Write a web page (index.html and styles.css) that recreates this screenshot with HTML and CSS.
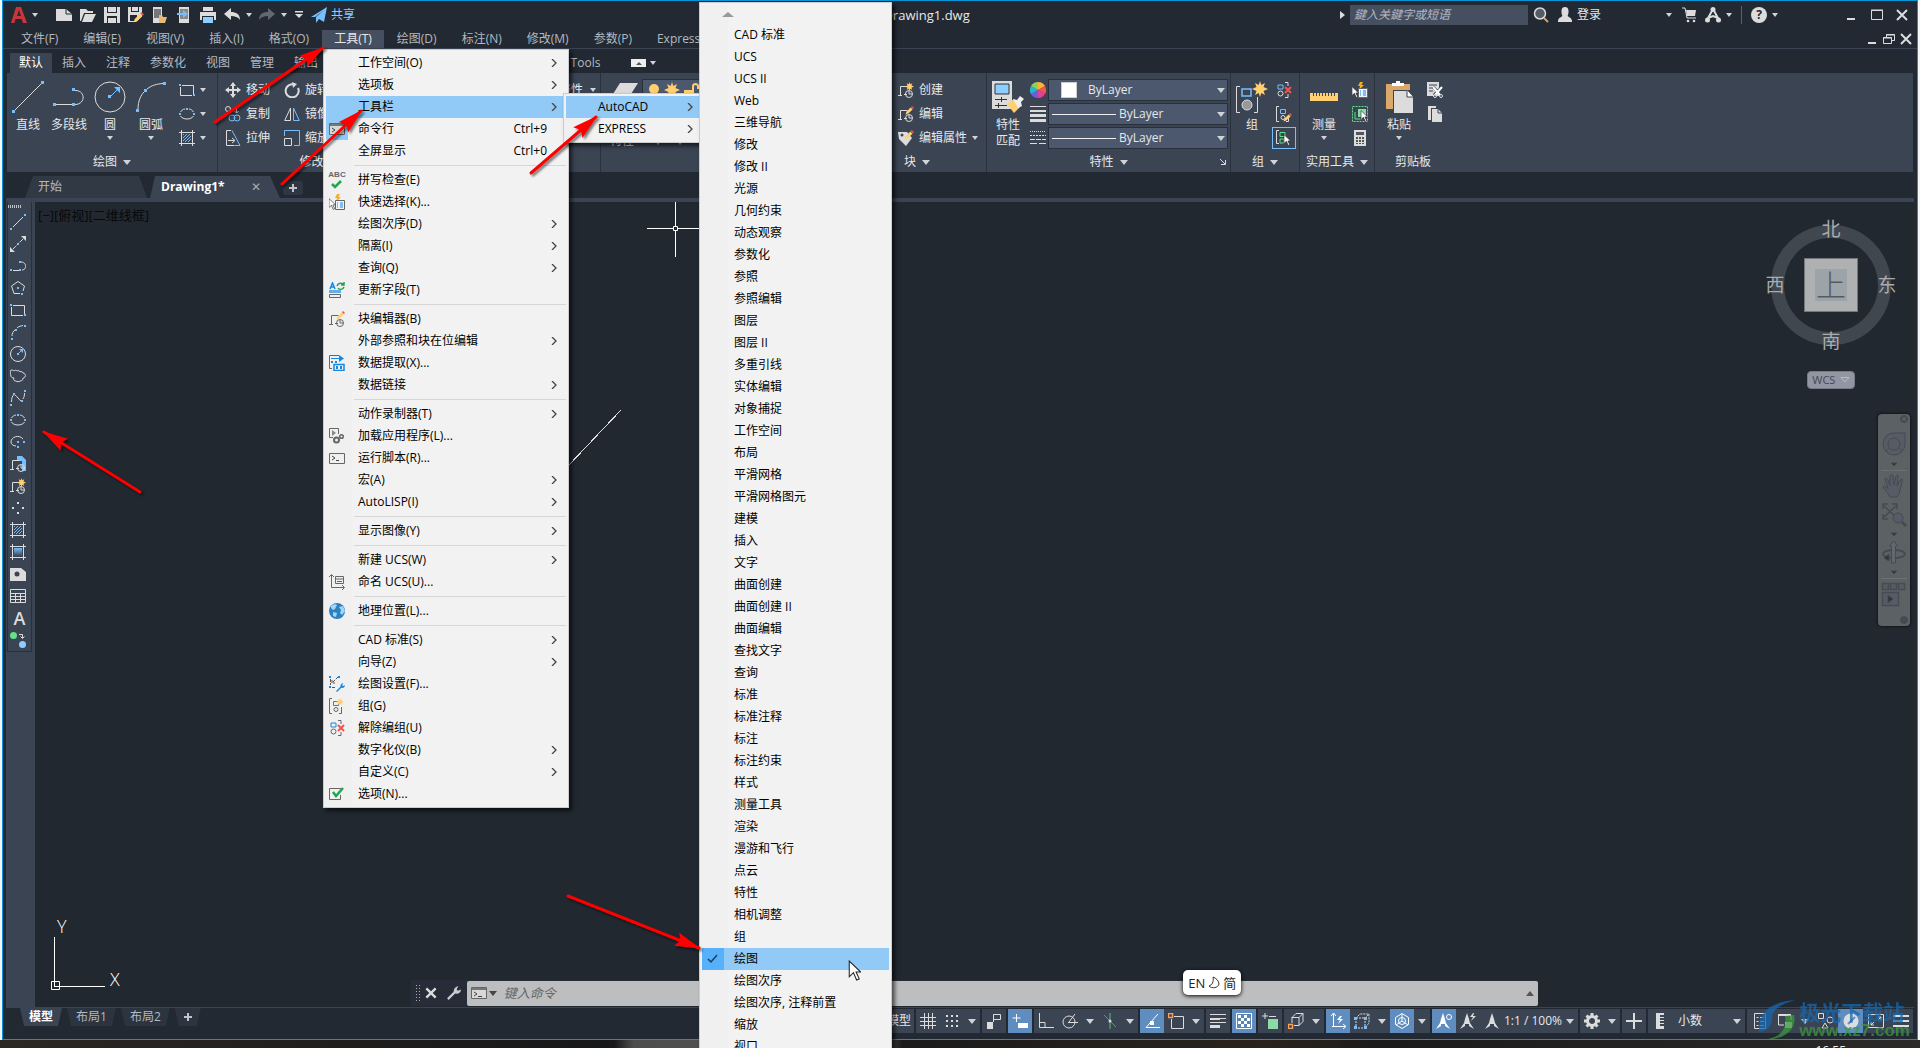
FILE: index.html
```html
<!DOCTYPE html>
<html lang="zh-CN">
<head>
<meta charset="utf-8">
<title>Drawing1.dwg</title>
<link rel="stylesheet" href="styles.css">
</head>
<body>
<svg class="defs" aria-hidden="true">
<defs>
<linearGradient id="fade" x1="0" y1="0" x2="0" y2="1"><stop offset="0" stop-color="#76bfff"/><stop offset="1" stop-color="#3b4453"/></linearGradient>
<pattern id="diag" width="3" height="3" patternUnits="userSpaceOnUse"><path d="M0 3L3 0M-1 1L1 -1M2 4L4 2" stroke="#76bfff" stroke-width="1"/></pattern>
<symbol id="line" viewBox="0 0 16 16"><path d="M3 13L13 3" class="s"/><path d="M0 14h2v2h-2zM14 0h2v2h-2z" class="b"/></symbol>
<symbol id="xline" viewBox="0 0 16 16"><path d="M3 13L13 3" class="s" stroke-dasharray="4 1"/><path d="M0 16v-5l5 5zM16 0v5l-5-5z" class="f"/><path d="M7 7h2v2h-2z" class="b"/></symbol>
<symbol id="pline" viewBox="0 0 16 16"><path d="M3 12.500h6M11 4c6 0 6 8 1 8" class="s"/><path d="M0 11h2v2h-2zM9 3h2v2h-2zM9 11h2v2h-2z" class="b"/></symbol>
<symbol id="polygon" viewBox="0 0 16 16"><path d="M10 13.500H4L1.500 6 8 1.500 14.500 6 13 11" class="s"/><path d="M7 7h2v2h-2zM11 13h2v2h-2z" class="b"/></symbol>
<symbol id="rect" viewBox="0 0 16 16"><path d="M3 3.500h11.500v8.500M13 13.500H1.500V5" class="s"/><path d="M0 2h2v2h-2zM14 12h2v2h-2z" class="b"/></symbol>
<symbol id="arc" viewBox="0 0 16 16"><path d="M2 12c0-2 1-5 3-6M7 4c2-2 4-2 6-2.500" class="s"/><path d="M1 14h2v2h-2zM5 5h2v2h-2zM14 1h2v2h-2z" class="b"/></symbol>
<symbol id="circle" viewBox="0 0 16 16"><circle cx="8" cy="8" r="7.500" class="s"/><path d="M9 7l3-3" stroke="#76bfff"/><path d="M7 7h2v2h-2zM9 3h4v4z" class="b"/></symbol>
<symbol id="cloud" viewBox="0 0 16 16"><path d="M1 8C0 6 0 4 1 2c1 0 2 0 3 1 1-1 2-1 3 0 1-1 3 0 3 1 1-1 3 0 3 1 2 0 3 2 2 4-1 1-2 1-2 1 0 2-1 3-3 3-1 1-3 1-4 0-2 0-3-1-2-3-2 0-3-1-3-2z" class="s"/></symbol>
<symbol id="spline" viewBox="0 0 16 16"><path d="M1.500 12c0-4 1-6 2-7M5 5c2 1 4 5 6 6M13 9c1-2 1.500-3 1.500-6" class="s"/><path d="M0 14h2v2h-2zM3 3h2v2h-2zM11 10h2v2h-2zM14 0h2v2h-2z" class="b"/></symbol>
<symbol id="ellipse" viewBox="0 0 16 16"><path d="M6 3C4 3 2 5 1.500 6M10 3c2 0 4 2 4.500 3M1.500 10c2 4 11 4 13 0" class="s"/><path d="M0 7h2v2h-2zM14 7h2v2h-2zM7 2h2v2h-2z" class="b"/></symbol>
<symbol id="ellarc" viewBox="0 0 16 16"><path d="M13 5C9 0 1 3 1 8c0 2 2 4 5 4" class="s"/><path d="M7 7h2v2h-2zM13 7h2v2h-2zM7 12h2v2h-2z" class="b"/></symbol>
<symbol id="block" viewBox="0 0 16 16"><path d="M0 13.500h4M2.500 13V4.500h7M6 12.500h3" class="s"/><circle cx="11" cy="12" r="3.500" class="s"/><path d="M11 9v3h3" class="s"/></symbol>
<symbol id="insertblock" viewBox="0 0 16 16"><path d="M7 0h5l4 4v11h-4V5H7z" class="b"/><use href="#block"/></symbol>
<symbol id="star" viewBox="0 0 16 16"><path d="M8 0l1.300 4L13 2l-1.500 4L16 8l-4.500 2L13 14l-3.700-2L8 16l-1.300-4L3 14l1.500-4L0 8l4.500-2L3 2l3.700 2z" fill="#ffcf70"/></symbol>
<symbol id="makeblock" viewBox="0 0 16 16"><use href="#block"/><use href="#star" x="7" y="0" width="9" height="9"/></symbol>
<symbol id="pencil" viewBox="0 0 16 16"><path d="M1 15l1.500-5L10 2.500 13.500 6 6 13.500z" fill="#ffcf70"/><path d="M10.500 2L12.500 0 16 3.500 14 5.500z" fill="#f3534c"/></symbol>
<symbol id="editblock" viewBox="0 0 16 16"><use href="#block"/><use href="#pencil" x="7" y="0" width="9" height="9"/></symbol>
<symbol id="editattr" viewBox="0 0 16 16"><path d="M0 2h9l5 6-6 8-7-7z" class="f"/><circle cx="4" cy="5" r="1.500" fill="#3b4453"/><use href="#pencil" x="6" y="0" width="10" height="10"/></symbol>
<symbol id="points" viewBox="0 0 16 16"><path d="M7 2h2v2h-2zM7 12h2v2h-2zM2 7h2v2h-2zM12 7h2v2h-2z" class="f"/></symbol>
<symbol id="hatch" viewBox="0 0 16 16"><path d="M4 4h8v8h-8z" fill="url(#diag)"/><path d="M0 2.500h16M0 13.500h16M2.500 0v16M13.500 0v16" class="s"/></symbol>
<symbol id="gradient" viewBox="0 0 16 16"><path d="M4 4h8v8h-8z" fill="url(#fade)"/><path d="M0 2.500h16M0 13.500h16M2.500 0v16M13.500 0v16" class="s"/></symbol>
<symbol id="region" viewBox="0 0 16 16"><path d="M0 2h11l5 4v9H0z" class="f"/><circle cx="7" cy="8" r="2.500" fill="#3b4453"/></symbol>
<symbol id="table" viewBox="0 0 16 16"><path d="M.5 1.500h15v13h-15zM0 5.500h16M0 8.500h16M0 11.500h16M5.500 5v9M10.500 5v9" class="s"/></symbol>
<symbol id="addsel" viewBox="0 0 16 16"><circle cx="3.500" cy="3.500" r="3.500" fill="#63e08a"/><circle cx="12.500" cy="12.500" r="3.500" fill="#8cceff"/><path d="M9 2.500h3.500V6M10.500 4.500l2 2 2-2" class="s"/></symbol>
<symbol id="move" viewBox="0 0 16 16"><path d="M8 1v14M1 8h14" class="s w"/><path d="M8 0l3 4H5zM8 16l3-4H5zM0 8l4-3v6zM16 8l-4-3v6z" class="f"/></symbol>
<symbol id="rotate" viewBox="0 0 16 16"><path d="M11 3A6.500 6.500 0 1 0 14 6" class="s w"/><path d="M8 0l5 2-4 4z" class="f"/></symbol>
<symbol id="copy" viewBox="0 0 16 16"><circle cx="3" cy="3" r="2.500" class="s"/><circle cx="7" cy="12" r="3" class="sb"/><circle cx="12" cy="12" r="3" class="sb"/><path d="M11.500 1v6M9.500 5l2 2 2-2" class="s"/></symbol>
<symbol id="mirror" viewBox="0 0 16 16"><path d="M6.500 2v12.500H.7z" class="s"/><path d="M9.500 2v12.500h5.800z" class="sb"/></symbol>
<symbol id="stretch" viewBox="0 0 16 16"><path d="M6 .5H1.500v15h8" class="s"/><path d="M7 .5l8 15H10" class="sb"/><path d="M3 10.500h6M7 8l3 2.500L7 13" class="s"/></symbol>
<symbol id="scale" viewBox="0 0 16 16"><path d="M.5 6V.5h15v15H10" class="sb"/><path d="M.5 8.500h7v7h-7z" class="s"/></symbol>
<symbol id="cursor" viewBox="0 0 12 20"><path d="M1 1v15l4-4 3 7 2.500-1L7.500 11.500H12z" fill="#fff" stroke="#222" stroke-width="1"/></symbol>
<symbol id="grp" viewBox="0 0 16 16"><path d="M3 .5H.5v15H3M10 15.500h2.500V9" class="s"/><path d="M4.500 3.500h5v4h-5z" class="sb"/><circle cx="7" cy="11.500" r="2" class="s"/></symbol>
<symbol id="newgrp" viewBox="0 0 16 16"><use href="#grp"/><use href="#star" x="7" y="0" width="8" height="8"/></symbol>
<symbol id="ungroup" viewBox="0 0 16 16"><path d="M2 3h5v4h-5z" class="sb"/><circle cx="4.500" cy="11.500" r="2.500" class="s"/><path d="M9 .5h3V4M9 15.500h3V12" class="s"/><path d="M9 5l6 6M15 5l-6 6" stroke="#f3534c" stroke-width="2"/></symbol>
<symbol id="editgrp" viewBox="0 0 16 16"><use href="#grp"/><use href="#pencil" x="7" y="7" width="9" height="9"/></symbol>
<symbol id="selgrp" viewBox="0 0 16 16"><path d="M3 .5H.5v13H3" class="s"/><path d="M4 2.500h5v4h-5zM4 9h4v4h-4z" fill="none" stroke="#63e08a"/><use href="#cursor" x="7" y="4" width="8" height="12"/></symbol>
<symbol id="qselect" viewBox="0 0 16 16"><path d="M8 0h3L9.500 3H12L7 8l1-4H6z" fill="#fbac19"/><path d="M6.500 6.500h9v9h-9z" fill="#eef4fb" stroke="#666"/><path d="M8 9h1m2 0h3M8 11h1m2 0h3M8 13h1m2 0h3" stroke="#1787e0"/><use href="#cursor" x="-1" y="4" width="8" height="12"/></symbol>
<symbol id="selall" viewBox="0 0 16 16"><path d="M.5.500h15v15H.5z" fill="none" stroke="#63e08a" stroke-dasharray="2 1"/><path d="M6 3h8v8H6z" fill="#8cdba6"/><path d="M3 6v7h7" stroke="#63e08a" fill="none"/><use href="#cursor" x="8" y="4" width="8" height="12"/></symbol>
<symbol id="calc" viewBox="0 0 16 16"><path d="M2 0h12v16H2z" class="f"/><path d="M4 2h8v3H4zM4 7h2v2H4zM7 7h2v2H7zM10 7h2v2h-2zM4 10h2v2H4zM7 10h2v2H7zM10 10h2v2h-2zM4 13h2v1H4zM7 13h2v1H7zM10 13h2v1h-2z" fill="#555"/></symbol>
<symbol id="cut" viewBox="0 0 16 16"><path d="M0 0h12v14H0z" class="f"/><path d="M2 3h8M2 6h6M2 9h4" stroke="#3b4453"/><path d="M6 5l8 8M15 5l-8 8" stroke="#3b4453" stroke-width="3"/><path d="M6 5l7 8M15 5l-7 8" stroke="#fff" stroke-width="2"/><circle cx="8" cy="14" r="1.500" class="s"/><circle cx="14" cy="14" r="1.500" class="s"/></symbol>
<symbol id="copydoc" viewBox="0 0 16 16"><path d="M1 0h8v2H4v12H1z" class="f"/><path d="M5 3h6l4 4v9H5z" class="f"/><path d="M11 3v4h4" stroke="#3b4453" fill="none"/></symbol>
<symbol id="terminal" viewBox="0 0 16 16"><path d="M.5 2.500h15v11H.5z" fill="#d8d8d8" stroke="#666"/><path d="M1 3h14v2H1z" fill="#777"/><path d="M3 7l3 2-3 2M7 11.500h4" fill="none" stroke="#444"/></symbol>
<symbol id="wrench" viewBox="0 0 16 16"><path d="M1 15l8-8" stroke="currentColor" stroke-width="2.500"/><path d="M8 8c-1-4 1-7 5-8l-2 4 1.500 1.500L16 4c0 4-4 6-8 4z" fill="currentColor"/></symbol>
<symbol id="mv" viewBox="0 0 8 8"><path d="M2 0l4 4-4 4" fill="none" stroke="#444" stroke-width="1.300"/></symbol>
<symbol id="person" viewBox="0 0 16 18"><path d="M4 5a4 5 0 1 1 8 0c0 3-1 4-1 5 2 2 5 2 5 7H0c0-5 3-5 5-7 0-1-1-2-1-5z" class="f"/></symbol>
<symbol id="annot" viewBox="0 0 16 16"><path d="M8 0l2 6 1 4 4 6-5-3V11H6v2l-5 3 4-6 1-4z" class="f"/></symbol>
</defs>
</svg>

<div class="window">
<header class="titlebar">
  <div class="quick">
    <button class="logo" aria-label="应用程序菜单"><svg width="16" height="16" viewBox="0 0 16 16"><path d="M0 16L5 0h5l6 16h-4l-1.500-4h-6L3.500 16zM6 9h4L8 3z" fill="#c9353c"/></svg><i class="caret"></i></button>
    <button aria-label="新建"><svg viewBox="0 0 16 16"><path d="M0 2h10l6 5v7H0z" class="f"/><path d="M10 2v5h6" stroke="#222933" fill="none"/></svg></button>
    <button aria-label="打开"><svg viewBox="0 0 16 16"><path d="M0 2h6l2 2h5v2H4L1 14H0z" class="f"/><path d="M5 7h11l-4 8H2z" class="f"/></svg></button>
    <button aria-label="保存"><svg viewBox="0 0 16 16"><path d="M0 0h16v16H0z" class="f"/><path d="M3 0h10v6H3zM3 9h10v7H3z" fill="#222933"/><path d="M4 0h8v5H4zM4 11h8v5H4z" class="f"/></svg></button>
    <button aria-label="另存为"><svg viewBox="0 0 16 16"><path d="M0 0h14v9l-6 6H0z" class="f"/><path d="M3 0h8v5H3zM2 8h7v6H2z" fill="#222933"/><path d="M4 0h6v4H4z" class="f"/><use href="#pencil" x="5" y="5" width="11" height="11"/></svg></button>
    <button aria-label="从移动设备打开"><svg viewBox="0 0 16 16"><path d="M1 0h9v16H1z" class="f"/><path d="M2 2h7v9H2z" fill="#777"/><path d="M7 8h3l1 2h4l-2 6H7z" fill="#e5ba76"/></svg></button>
    <button aria-label="保存到移动设备"><svg viewBox="0 0 16 16"><path d="M3 0h10v16H3z" class="f"/><path d="M4 2h8v10H4z" fill="#888"/><path d="M1 6h6V3l5 4-5 4V8H1z" fill="#76bfff"/></svg></button>
    <button aria-label="打印"><svg viewBox="0 0 16 16"><path d="M3 0h10v4H3zM0 5h16v8H0z" class="f"/><path d="M2 9h12v7H2z" fill="#222933"/><path d="M3 10h10v6H3z" fill="#8cceff"/></svg></button>
    <button aria-label="放弃"><svg viewBox="0 0 16 16"><path d="M0 7l7-6v4c5 0 9 2 9 8-2-3-5-4-9-4v4z" class="f"/></svg></button><i class="caret"></i>
    <button class="dim" aria-label="重做"><svg viewBox="0 0 16 16"><path d="M16 7L9 1v4C4 5 0 7 0 13c2-3 5-4 9-4v4z" class="f"/></svg></button><i class="caret"></i>
    <button class="customize" aria-label="自定义快速访问工具栏"><svg viewBox="0 0 8 8"><path d="M0 0h8v1.500H0zM0 3h8L4 7z" class="f"/></svg></button>
    <button class="share"><svg viewBox="0 0 16 16"><path d="M0 10L16 0l-3 15-5-3-3 4v-6l8-7-9 7z" fill="#76bfff"/></svg>共享</button>
  </div>
  <h1>Drawing1.dwg</h1>
  <div class="info">
    <i class="caret-right"></i>
    <input class="search" type="text" placeholder="鍵入关鍵字或短语" aria-label="搜索">
    <button aria-label="搜索"><svg viewBox="0 0 16 16"><circle cx="7" cy="6.500" r="5.500" fill="#555b65" stroke="#dcdcdc" stroke-width="1.500"/><path d="M11 11l4 4" stroke="#e0a060" stroke-width="2"/></svg></button>
    <button class="login"><svg viewBox="0 0 16 18"><use href="#person"/></svg>登录</button>
    <i class="caret login-caret"></i>
    <button class="cart" aria-label="商店"><svg viewBox="0 0 16 16"><path d="M1 1h3l2 10h9" class="s"/><path d="M5 3h10l-1 6H6z" class="f"/><circle cx="7" cy="14" r="1.300" class="f"/><circle cx="13" cy="14" r="1.300" class="f"/></svg></button>
    <button aria-label="Autodesk App Store"><svg viewBox="0 0 16 16"><path d="M8 2L2 13M8 2l6 11M3 11l5-2 5 2" class="s w"/><circle cx="2.500" cy="13" r="2.500" class="f"/><circle cx="13.500" cy="13" r="2.500" class="f"/><circle cx="8" cy="2.500" r="2.500" class="f"/></svg></button><i class="caret"></i>
    <span class="vsep"></span>
    <button class="help" aria-label="帮助">?</button><i class="caret"></i>
  </div>
  <div class="winbtns">
    <button aria-label="最小化"><svg viewBox="0 0 12 12"><path d="M1 9h8v2H1z" class="f"/></svg></button>
    <button aria-label="最大化"><svg viewBox="0 0 12 12"><path d="M.5 1.500h11v9H.5zM0 1h12" class="s"/></svg></button>
    <button aria-label="关闭"><svg viewBox="0 0 12 12"><path d="M1 1l10 10M11 1L1 11" class="s w"/></svg></button>
  </div>
</header>

<nav class="menubar">
  <button>文件(F)</button><button>编辑(E)</button><button>视图(V)</button><button>插入(I)</button><button>格式(O)</button><button class="open">工具(T)</button><button>绘图(D)</button><button>标注(N)</button><button>修改(M)</button><button>参数(P)</button><button>Express</button>
  <div class="docbtns">
    <button aria-label="最小化图形"><svg viewBox="0 0 12 12"><path d="M2 9h8v2H2z" class="f"/></svg></button>
    <button aria-label="还原图形"><svg viewBox="0 0 12 12"><path d="M3.500 4V1.500h8v6H9M.5 4.500h8v6h-8zM3 2h9M0 5h9" class="s"/></svg></button>
    <button aria-label="关闭图形"><svg viewBox="0 0 12 12"><path d="M1 1l10 10M11 1L1 11" class="s w"/></svg></button>
  </div>
</nav>

<nav class="ribbon-tabs">
  <button class="active">默认</button><button>插入</button><button>注释</button><button>参数化</button><button>视图</button><button>管理</button><button>输出</button>
  <button class="express-tools">Express Tools</button>
  <span class="minimize"><i class="caret-up"></i></span><i class="caret"></i>
</nav>

<section class="ribbon">
  <div class="panel draw">
    <div class="body">
      <button class="big"><svg viewBox="0 0 32 32"><path d="M3 29L29 3" class="s"/><path d="M0 29h3v3H0zM29 0h3v3h-3z" class="b"/></svg>直线</button>
      <button class="big"><svg viewBox="0 0 32 32"><path d="M3 23.500h16M21 9.500c12-1 12 14 1 14" class="s"/><path d="M0 22h3v3H0zM19 7h3v3h-3zM19 22h3v3h-3z" class="b"/></svg>多段线</button>
      <button class="big"><svg viewBox="0 0 32 32"><circle cx="16" cy="16" r="15" class="s"/><path d="M17 15l8-8" stroke="#76bfff"/><path d="M14 14h3v3h-3zM20 6h6v6z" class="b"/></svg>圆<i class="caret"></i></button>
      <button class="big"><svg viewBox="0 0 32 32"><path d="M3 28C3 20 6 14 9 11M12 8C17 4 22 3 28 2.500" class="s"/><path d="M1 28h3v3H1zM9 8h3v3H9zM28 1h3v3h-3z" class="b"/></svg>圆弧<i class="caret"></i></button>
      <div class="col tools">
        <button><svg><use href="#rect"/></svg><i class="caret"></i></button>
        <button><svg><use href="#ellipse"/></svg><i class="caret"></i></button>
        <button><svg><use href="#hatch"/></svg><i class="caret"></i></button>
      </div>
    </div>
    <div class="title">绘图<i class="caret wide"></i></div>
  </div>
  <div class="panel modify">
    <div class="body">
      <div class="col first"><button><svg><use href="#move"/></svg>移动</button><button><svg><use href="#copy"/></svg>复制</button><button><svg><use href="#stretch"/></svg>拉伸</button></div>
      <div class="col"><button><svg><use href="#rotate"/></svg>旋转</button><button><svg><use href="#mirror"/></svg>镜像</button><button><svg><use href="#scale"/></svg>缩放</button></div>
    </div>
    <div class="title">修改<i class="caret wide"></i></div>
  </div>
  <div class="panel annotate">
    <div class="body">
      <div class="col"><button>线性<i class="caret"></i></button><button>引线<i class="caret"></i></button><button class="plain">表格</button></div>
    </div>
    <div class="title">注释<i class="caret wide"></i></div>
  </div>
  <div class="panel layers">
    <div class="body">
      <button class="big two"><svg viewBox="0 0 32 32"><path d="M0 24L14 2h18L18 24z" class="f"/><path d="M20 24L30 8" stroke="#3b4453" stroke-width="2"/></svg>图层<br>特性</button>
      <div class="col">
        <div class="combo"><svg viewBox="0 0 60 16" class="layerset"><circle cx="8" cy="7" r="5" fill="#ffcf70"/><path d="M6 13h4v2H6z" fill="#ddd"/><use href="#star" x="18" y="0" width="16" height="16"/><path d="M38 8h10v7H38zM46 8V4c0-4 7-4 7 0v3h-2V4c0-1-3-1-3 0v4z" fill="#ffcf70"/></svg></div>
        <div class="combo"></div>
        <button><i class="caret"></i><i class="caret"></i></button>
      </div>
    </div>
    <div class="title">图层<i class="caret wide"></i></div>
  </div>
  <div class="panel blocks">
    <div class="body">
      <button class="big"><svg><use href="#insertblock"/></svg>插入</button>
      <div class="col"><button><svg><use href="#makeblock"/></svg>创建</button><button><svg><use href="#editblock"/></svg>编辑</button><button><svg><use href="#editattr"/></svg>编辑属性<i class="caret"></i></button></div>
    </div>
    <div class="title">块<i class="caret wide"></i></div>
  </div>
  <div class="panel props">
    <div class="body">
      <button class="big two"><svg viewBox="0 0 32 32"><path d="M0 0h20v28H0z" class="f"/><path d="M3 3h14v10H3z" fill="#8cceff" stroke="#333"/><path d="M3 18.500h12M9.500 16v5M3 24.500h12M6.500 22v5" stroke="#333"/><path d="M15 23l7-5 6 8-6 6z" fill="#ffcf70"/><path d="M21 18l4 1 3-4 4 3-3 3 1 4-4 2z" fill="#eee"/></svg>特性<br>匹配</button>
      <div class="col icons3">
        <svg viewBox="0 0 16 16"><path d="M8 8V0a8 8 0 0 1 7 4z" fill="#ffb23e"/><path d="M8 8l7-4a8 8 0 0 1 0 8z" fill="#f0564a"/><path d="M8 8l7 4a8 8 0 0 1-7 4z" fill="#e0409a"/><path d="M8 8v8a8 8 0 0 1-7-4z" fill="#6a5be8"/><path d="M8 8l-7 4a8 8 0 0 1 0-8z" fill="#2fb3c8"/><path d="M8 8L1 4a8 8 0 0 1 7-4z" fill="#8fd05a"/></svg>
        <svg viewBox="0 0 16 16"><path d="M0 0h16v1H0zM0 4h16v2H0zM0 8h16v3H0zM0 13h16v3H0z" class="f"/></svg>
        <svg viewBox="0 0 16 16"><path d="M0 1.500h16" class="s" stroke-dasharray="1 1"/><path d="M0 5.500h16" class="s" stroke-dasharray="2 1"/><path d="M0 9.500h16" class="s" stroke-dasharray="5 1"/><path d="M0 13.500h16" class="s" stroke-dasharray="7 2"/></svg>
      </div>
      <div class="col combos">
        <label class="combo"><span class="swatch"></span><select aria-label="对象颜色"><option>ByLayer</option></select><i class="caret wide"></i></label>
        <label class="combo"><span class="rule"></span><select aria-label="线宽"><option>ByLayer</option></select><i class="caret wide"></i></label>
        <label class="combo"><span class="rule"></span><select aria-label="线型"><option>ByLayer</option></select><i class="caret wide"></i></label>
      </div>
    </div>
    <div class="title">特性<i class="caret wide"></i><svg class="corner" viewBox="0 0 6 6"><path d="M0 0l5 5M5.500 1v4.500H1" class="s"/></svg></div>
  </div>
  <div class="panel groups">
    <div class="body">
      <button class="big"><svg viewBox="0 0 32 32"><path d="M4 5.500H.5v26H4M18 31.500h3.500V16" class="s"/><path d="M6 8h9v7H6z" class="sb" stroke-width="1.500"/><circle cx="11" cy="24" r="5" fill="#999" stroke="#ddd"/><use href="#star" x="16" y="0" width="16" height="16"/></svg>组</button>
      <div class="col"><button aria-label="解除编组"><svg><use href="#ungroup"/></svg></button><button aria-label="组编辑"><svg><use href="#editgrp"/></svg></button><button class="on" aria-label="启用组选择"><svg><use href="#selgrp"/></svg></button></div>
    </div>
    <div class="title">组<i class="caret wide"></i></div>
  </div>
  <div class="panel utils">
    <div class="body">
      <button class="big"><svg viewBox="0 0 32 32"><path d="M2 12h28v8H2z" fill="#ffcf70"/><path d="M5.500 12v3M8.500 12v3M11.500 12v3M14.500 12v3M17.500 12v3M20.500 12v3M23.500 12v3M26.500 12v3" stroke="#3b4453"/></svg>测量<i class="caret"></i></button>
      <div class="col"><button aria-label="快速选择"><svg><use href="#qselect"/></svg></button><button aria-label="全部选择"><svg><use href="#selall"/></svg></button><button aria-label="快速计算器"><svg><use href="#calc"/></svg></button></div>
    </div>
    <div class="title">实用工具<i class="caret wide"></i></div>
  </div>
  <div class="panel clip">
    <div class="body">
      <button class="big"><svg viewBox="0 0 32 32"><path d="M3 3h24v25H3z" fill="#dba86c"/><path d="M10 9h20v23H10z" fill="#3b4453"/><path d="M11 10h13l6 6v16H11z" class="f"/><path d="M24 9v7h6" stroke="#3b4453" fill="#fff"/><path d="M9 2h4V0h4v2h4v3H9z" fill="#fff"/></svg>粘贴<i class="caret"></i></button>
      <div class="col"><button aria-label="剪切"><svg><use href="#cut"/></svg></button><button aria-label="复制"><svg><use href="#copydoc"/></svg></button></div>
    </div>
    <div class="title">剪贴板</div>
  </div>
</section>

<nav class="doc-tabs">
  <button class="start">开始</button>
  <button class="current">Drawing1*<span class="x">✕</span></button>
  <button class="add" aria-label="新图形"><svg viewBox="0 0 8 8"><path d="M4 0v8M0 4h8" stroke="#c0c4ca" stroke-width="2"/></svg></button>
</nav>

<main class="workspace">
  <aside class="dock">
    <div class="toolbar">
      <div class="grip"></div>
      <button aria-label="直线"><svg><use href="#line"/></svg></button><button aria-label="构造线"><svg><use href="#xline"/></svg></button><button aria-label="多段线"><svg><use href="#pline"/></svg></button><button aria-label="多边形"><svg><use href="#polygon"/></svg></button><button aria-label="矩形"><svg><use href="#rect"/></svg></button><button aria-label="圆弧"><svg><use href="#arc"/></svg></button><button aria-label="圆"><svg><use href="#circle"/></svg></button><button aria-label="修订云线"><svg><use href="#cloud"/></svg></button><button aria-label="样条曲线"><svg><use href="#spline"/></svg></button><button aria-label="椭圆"><svg><use href="#ellipse"/></svg></button><button aria-label="椭圆弧"><svg><use href="#ellarc"/></svg></button><button aria-label="插入块"><svg><use href="#insertblock"/></svg></button><button aria-label="创建块"><svg><use href="#makeblock"/></svg></button><button aria-label="点"><svg><use href="#points"/></svg></button><button aria-label="图案填充"><svg><use href="#hatch"/></svg></button><button aria-label="渐变色"><svg><use href="#gradient"/></svg></button><button aria-label="面域"><svg><use href="#region"/></svg></button><button aria-label="表格"><svg><use href="#table"/></svg></button><button class="mtext" aria-label="多行文字">A</button><button aria-label="添加选定对象"><svg><use href="#addsel"/></svg></button>
    </div>
  </aside>
  <div class="canvas">
    <div class="viewport-label">[−][俯视][二维线框]</div>
    <svg class="drawing" aria-hidden="true">
      <path d="M612 26.500h52M640.500 0v55" stroke="#fff"/><path d="M638.500 24.500h4v4h-4z" fill="#212830" stroke="#fff"/>
      <path d="M586 208L534 263" stroke="#dfe1e4" shape-rendering="crispEdges"/>
    </svg>
    <svg class="ucs" viewBox="0 0 76 76"><path d="M3.500 68V18M4 67.500h50M.5 62.500h8v8h-8z" fill="none" stroke="#fff"/><text x="6" y="14">Y</text><text x="59" y="67">X</text></svg>
    <div class="viewcube"><span>北</span><span>西</span><b>上</b><span>东</span><span>南</span></div>
    <button class="wcs">WCS<svg viewBox="0 0 10 6"><path d="M1 .5h8L5 5z" fill="none" stroke="#b8bbc4"/></svg></button>
    <div class="navbar">
      <svg viewBox="0 0 32 212" fill="none" stroke="#454b53"><circle cx="26" cy="5" r="3.500" fill="#454b53"/><path d="M24 3l4 4M28 3l-4 4" stroke="#62686c"/><path d="M16 19h11v11a11 11 0 1 1-11-11z" fill="#555c66"/><circle cx="16" cy="30" r="6"/><path d="M11 34l-3 3M21 34l3 3"/><path d="M13 49h6l-3 3z" fill="#333"/><path d="M3 56.500h26M3 164.500h26" stroke="#6a7073"/><path d="M12 83c-2-5-6-7-7-10 1-2 3 0 5 2L7 65c1-2 2-1 3 1l2 6V62c1-2 3-1 3 0l1 9 2-9c1-1 3-1 2 1l-1 9 3-6c2-2 3 0 2 2l-3 12-2 3z" fill="#555c66"/><path d="M5 91l14 13M19 91L5 104M5 95v-5h5M14 90h5v5M5 100v5h5" stroke-width="1.500"/><circle cx="20" cy="104" r="5" fill="#555c66"/><path d="M24 108l4 4" stroke-width="3"/><path d="M13 119h6l-3 3zM13 157h6l-3 3z" fill="#333"/><ellipse cx="16" cy="140" rx="11" ry="4" stroke-width="2"/><path d="M13.500 149v-17h-2l4-5 4 5h-2v17z" fill="#62686c"/><path d="M6 144l5-4v7z" fill="#333"/><path d="M4.500 169.500h6v6h-6zM12.500 169.500h6v6h-6zM20.500 169.500h6v6h-6zM4.500 178.500h16v13h-16z" fill="#555c66" stroke-width="1.500"/><path d="M10 181v8l5-4z" fill="#333"/><circle cx="26" cy="206" r="3.500" fill="#454b53"/></svg>
    </div>
    <div class="cmdline">
      <span class="cmdgrip"></span>
      <button class="close" aria-label="关闭"><svg viewBox="0 0 12 12"><path d="M2 2l8 8M10 2l-8 8" class="s w"/></svg></button>
      <button aria-label="自定义"><svg><use href="#wrench"/></svg></button>
      <label class="cmdbox"><svg><use href="#terminal"/></svg><i class="caret wide"></i><input type="text" placeholder="键入命令" aria-label="命令"><i class="caret-up"></i></label>
    </div>
    <div class="ime">EN<svg viewBox="0 0 12 14"><path d="M5 1c1 5-1 8-4 9 3 3 9 2 10-2 0-3-3-6-6-7z" fill="none" stroke="#333"/></svg>简</div>
  </div>
</main>

<footer class="status">
  <div class="layouts"><button class="active">模型</button><button>布局1</button><button>布局2</button><button class="add" aria-label="新布局"><svg viewBox="0 0 8 8"><path d="M4 0v8M0 4h8" stroke="#c0c4ca" stroke-width="2"/></svg></button></div>
  <div class="tray">
    <button class="model">模型</button>
    <div class="set"><button><svg viewBox="0 0 16 16"><path d="M4.500 0v16M8.500 0v16M12.500 0v16M0 4.500h16M0 8.500h16M0 12.500h16" class="s"/></svg></button><button><svg viewBox="0 0 16 16"><path d="M3 2v14M8 2v14M13 2v14" stroke="#dcdcdc" stroke-width="2" stroke-dasharray="2 3"/></svg></button><i class="caret wide"></i></div>
    <div class="set"><button><svg viewBox="0 0 16 16"><path d="M1 9h6v7H1z" class="f"/><path d="M7.500 9V1.500h7v5h-7" class="s"/></svg></button></div>
    <div class="set"><button class="hl"><svg viewBox="0 0 16 16"><path d="M4.500 1v8M.5 5h8" stroke="#fff"/><path d="M6 10h10v5H6z" fill="#fff"/></svg></button></div>
    <div class="set"><button><svg viewBox="0 0 16 16"><path d="M1.500 0v14.500H16M2 9.500h5v5" class="s"/></svg></button><button><svg viewBox="0 0 16 16"><circle cx="7" cy="9" r="6" class="s"/><path d="M6 9.500h10M7 9l6-8" class="s"/></svg></button><i class="caret wide"></i><button><svg viewBox="0 0 16 16"><path d="M2 2l12 12" stroke="#f3534c"/><path d="M8 0v16" stroke="#4fc16e"/><circle cx="8" cy="8" r="1.500" class="f"/></svg></button><i class="caret wide"></i></div>
    <div class="set"><button class="hl"><svg viewBox="0 0 16 16"><path d="M14 1L2 14.500h14" stroke="#fff" fill="none"/><path d="M6 8h4v4H6z" fill="#fff"/></svg></button><button><svg viewBox="0 0 16 16"><path d="M6 3.500h9.500v12h-12V6" class="s"/><path d="M.5.500h4v4h-4z" fill="none" stroke="#f5a25d" stroke-width="1.500"/></svg></button><i class="caret wide"></i></div>
    <div class="set"><button><svg viewBox="0 0 16 16"><path d="M0 1h16v1H0zM0 5h10v2H0zM0 9h16v1H0zM0 12h10v3H0zM10 5h6v1h-6z" class="f"/></svg></button></div>
    <div class="set"><button class="hl"><svg viewBox="0 0 16 16"><path d="M.5.500h15v15H.5z" fill="#5b84b3" stroke="#fff"/><path d="M2 2h3v3H2zM8 2h3v3H8zM5 5h3v3H5zM11 5h3v3h-3zM2 8h3v3H2zM8 8h3v3H8zM5 11h3v3H5zM11 11h3v3h-3z" fill="#fff"/></svg></button></div>
    <div class="set"><button><svg viewBox="0 0 16 16"><path d="M3 0v6M0 3h6" class="s"/><path d="M6 6h10v10H6z" fill="#8cdba6"/><path d="M7 3.500h7" class="s"/></svg></button></div>
    <div class="set"><button><svg viewBox="0 0 16 16"><path d="M4 4.500h7v8H6M4 4.500l4-4h7v8l-4 4M11 4.500l4-4M4 4v6" class="s"/><path d="M.5 11.500h4v4h-4z" fill="none" stroke="#f5a25d" stroke-width="1.500"/></svg></button><i class="caret wide"></i></div>
    <div class="set"><button class="hl"><svg viewBox="0 0 16 16"><path d="M3.500 1v13M2 13.500h13M1 3l2.500-3L6 3M13 11l3 2.500L13 16" stroke="#fff" fill="none"/><path d="M10 3l-3 4h3l-2 4 5-5h-3l2-3z" fill="#fff"/></svg></button><button><svg viewBox="0 0 16 16"><path d="M2 5l4-4h9v9l-4 5M2 5h9v10H2zM11 5l4-4" class="s" stroke-dasharray="2 1"/><path d="M0 4h3v3H0zM0 13h3v3H0zM10 4h3v3h-3zM10 13h3v3h-3z" class="b"/></svg></button><i class="caret wide"></i><button class="hl"><svg viewBox="0 0 16 16"><path d="M8 .5l6.500 4v7l-6.500 4-6.500-4v-7zM8 1v7l-6 4M8 8l6 4" fill="none" stroke="#fff"/><circle cx="8" cy="8" r="3.500" fill="none" stroke="#fff"/></svg></button><i class="caret wide"></i></div>
    <div class="set"><button class="hl"><svg viewBox="0 0 16 16"><use href="#annot" x="-1"/><circle cx="13" cy="4" r="2.500" fill="none" stroke="#fff"/></svg></button><button><svg viewBox="0 0 16 16"><use href="#annot" x="-1"/><path d="M13 0l-3 4h3l-2 4 5-5h-3l1-3z" class="f"/></svg></button><button><svg><use href="#annot"/></svg></button><button class="scale">1:1 / 100%</button><i class="caret wide"></i></div>
    <div class="set"><button><svg viewBox="0 0 16 16"><circle cx="8" cy="8" r="4.500" fill="none" stroke="#dcdcdc" stroke-width="3"/><path d="M8 0v4M8 12v4M0 8h4M12 8h4M2.500 2.500l3 3M10.500 10.500l3 3M13.500 2.500l-3 3M5.500 10.500l-3 3" stroke="#dcdcdc" stroke-width="3"/></svg></button><i class="caret wide"></i></div>
    <div class="set"><button><svg viewBox="0 0 16 16"><path d="M8 0v16M0 8h16" class="s w"/></svg></button></div>
    <div class="set units"><svg viewBox="0 0 8 16"><path d="M0 0h8v2H4v2h4v1H4v2h4v1H4v2h4v1H4v2h4v3H0z" class="f"/></svg><select aria-label="单位"><option>小数</option></select><i class="caret wide"></i></div>
    <div class="set last"><button><svg viewBox="0 0 16 16"><path d="M2.500.500h11v15h-11zM4.500 4.500h2M8 4.500h4M4.500 8.500h2M8 8.500h4M4.500 12.500h2M8 12.500h4" class="s"/></svg></button><button><svg viewBox="0 0 16 16"><path d="M1 2.500h13V7M1.500 2v10H7M1 1.500h13" class="s"/><path d="M8 9h7v6H8z" class="f"/></svg></button><i class="caret wide"></i><button><svg viewBox="0 0 16 16"><path d="M.5.500h5v5h-5z" class="s"/><circle cx="12" cy="7" r="3" class="s"/><path d="M7 10l3 5H4z" class="s"/></svg></button><button class="hl"><svg viewBox="0 0 16 16"><circle cx="8" cy="8" r="7.500" fill="#ddd"/><path d="M5 11l7-7" stroke="#5f8dbf" stroke-width="2"/></svg></button><button><svg viewBox="0 0 16 16"><path d="M.5 1.500h15v13H.5zM10 7l3-3M10 4h3v3M6 9l-3 3M3 9v3h3" class="s"/></svg></button><button><svg viewBox="0 0 16 16"><path d="M0 2h16v2H0zM0 7h16v2H0zM0 12h16v2H0z" class="f"/></svg></button></div>
  </div>
</footer>
</div>
<div class="taskbar"><time>16:55</time></div>

<div class="watermark"><svg viewBox="0 0 40 40"><path d="M0 32C-2 14 10 2 36 0 20 5 12 10 13 20c-1 8-6 11-13 12z" fill="#1767ae"/><path d="M2 40c20-2 26-10 24-24l9-1c3 12-6 25-33 25z" fill="#3a9a3d"/></svg><p>极光下载站<small>www.xz7.com</small></p></div>

<div class="menu tools-menu" role="menu">
  <button>工作空间(O)<svg class="more"><use href="#mv"/></svg></button>
  <button>选项板<svg class="more"><use href="#mv"/></svg></button>
  <button class="hot">工具栏<svg class="more"><use href="#mv"/></svg></button>
  <button><span class="ic on"><svg><use href="#terminal"/></svg></span>命令行<kbd>Ctrl+9</kbd></button>
  <button>全屏显示<kbd>Ctrl+0</kbd></button>
  <hr>
  <button><span class="ic spell">ABC<svg viewBox="0 0 16 9"><path d="M4 4l3 3 6-6" fill="none" stroke="#21a650" stroke-width="2.500"/></svg></span>拼写检查(E)</button>
  <button><span class="ic"><svg><use href="#qselect"/></svg></span>快速选择(K)...</button>
  <button>绘图次序(D)<svg class="more"><use href="#mv"/></svg></button>
  <button>隔离(I)<svg class="more"><use href="#mv"/></svg></button>
  <button>查询(Q)<svg class="more"><use href="#mv"/></svg></button>
  <button><span class="ic"><svg viewBox="0 0 16 16"><path d="M1 7l2.500-6L6 7M2 5h3" fill="none" stroke="#1787e0" stroke-width="1.500"/><path d="M8 4c1-3 5-4 7-1M15 0v3h-3M15 5c-1 3-5 3-6 1" fill="none" stroke="#21a650" stroke-width="1.500"/><path d="M0 8h12v3H0z" fill="#62aee8"/><path d="M.5 12.500h11v3H.5z" fill="none" stroke="#666"/></svg></span>更新字段(T)</button>
  <hr>
  <button><span class="ic"><svg><use href="#editblock"/></svg></span>块编辑器(B)</button>
  <button>外部参照和块在位编辑<svg class="more"><use href="#mv"/></svg></button>
  <button><span class="ic"><svg viewBox="0 0 16 16"><path d="M3 13.500H.5V.5H10" fill="none" stroke="#666"/><path d="M2 3h9v1H2zM10 0l5 3.500L10 7zM2 6h2v2H2zM6 6h2v2H6z" fill="#1787e0"/><path d="M5 9.500h10v6H5z" fill="none" stroke="#1787e0" stroke-width="1.500"/><path d="M7 11h2v3H7zM11 11h2v3h-2z" fill="#1787e0"/></svg></span>数据提取(X)...</button>
  <button>数据链接<svg class="more"><use href="#mv"/></svg></button>
  <hr>
  <button>动作录制器(T)<svg class="more"><use href="#mv"/></svg></button>
  <button><span class="ic"><svg viewBox="0 0 16 16"><path d="M4 9.500H.5v-9h9V6" fill="none" stroke="#666"/><path d="M3 2v6l4-3z" fill="#888"/><circle cx="7.500" cy="12" r="2.500" fill="none" stroke="#666" stroke-width="2"/><circle cx="12.500" cy="8.500" r="1.800" fill="none" stroke="#666" stroke-width="1.500"/></svg></span>加载应用程序(L)...</button>
  <button><span class="ic"><svg viewBox="0 0 16 16"><path d="M.5 3.500h15v10H.5z" fill="none" stroke="#666"/><path d="M3 6l3 2-3 2M7 10.500h3" fill="none" stroke="#444"/></svg></span>运行脚本(R)...</button>
  <button>宏(A)<svg class="more"><use href="#mv"/></svg></button>
  <button>AutoLISP(I)<svg class="more"><use href="#mv"/></svg></button>
  <hr>
  <button>显示图像(Y)<svg class="more"><use href="#mv"/></svg></button>
  <hr>
  <button>新建 UCS(W)<svg class="more"><use href="#mv"/></svg></button>
  <button><span class="ic"><svg viewBox="0 0 16 16"><path d="M2.500 1v12.500H15M0 3l2.500-2.500L5 3M13 11l2.500 2.500L13 16M6.500 2.500h8v7h-8zM6 5h9M8 7.500h5" fill="none" stroke="#666"/></svg></span>命名 UCS(U)...</button>
  <hr>
  <button><span class="ic"><svg viewBox="0 0 16 16"><circle cx="8" cy="8" r="8" fill="#2d80bf"/><path d="M2 3c2-2 5-2 6-1L6 6 4 7 2 5zM10 4l4-1 2 5-3 4-2-2 1-3zM4 9l4 1-1 4-3-1z" fill="#a2d5f8"/></svg></span>地理位置(L)...</button>
  <hr>
  <button>CAD 标准(S)<svg class="more"><use href="#mv"/></svg></button>
  <button>向导(Z)<svg class="more"><use href="#mv"/></svg></button>
  <button><span class="ic blue"><svg viewBox="0 0 16 16"><path d="M1.500 3v6M3 11.500h4M9 1L3 7M3 4v3h3" fill="none" stroke="#555" stroke-dasharray="3 1"/><path d="M0 0h2v2H0zM9 0h2v2H9zM0 10h2v2H0z" fill="#1787e0"/><use href="#wrench" x="7" y="7" width="9" height="9"/></svg></span>绘图设置(F)...</button>
  <button><span class="ic"><svg><use href="#newgrp"/></svg></span>组(G)</button>
  <button><span class="ic"><svg><use href="#ungroup"/></svg></span>解除编组(U)</button>
  <button>数字化仪(B)<svg class="more"><use href="#mv"/></svg></button>
  <button>自定义(C)<svg class="more"><use href="#mv"/></svg></button>
  <button><span class="ic"><svg viewBox="0 0 16 16"><path d="M12 2.500H.5v11h11V9" fill="none" stroke="#666"/><path d="M4 6l3 4 7-8" fill="none" stroke="#21a650" stroke-width="2.500"/></svg></span>选项(N)...</button>
</div>

<div class="menu toolbars-menu" role="menu">
  <button class="hot">AutoCAD<svg class="more"><use href="#mv"/></svg></button>
  <button>EXPRESS<svg class="more"><use href="#mv"/></svg></button>
</div>

<div class="menu list-menu" role="menu">
  <div class="scroll"><i class="caret-up"></i></div>
  <button>CAD 标准</button><button>UCS</button><button>UCS II</button><button>Web</button><button>三维导航</button><button>修改</button><button>修改 II</button><button>光源</button><button>几何约束</button><button>动态观察</button><button>参数化</button><button>参照</button><button>参照编辑</button><button>图层</button><button>图层 II</button><button>多重引线</button><button>实体编辑</button><button>对象捕捉</button><button>工作空间</button><button>布局</button><button>平滑网格</button><button>平滑网格图元</button><button>建模</button><button>插入</button><button>文字</button><button>曲面创建</button><button>曲面创建 II</button><button>曲面编辑</button><button>查找文字</button><button>查询</button><button>标准</button><button>标准注释</button><button>标注</button><button>标注约束</button><button>样式</button><button>测量工具</button><button>渲染</button><button>漫游和飞行</button><button>点云</button><button>特性</button><button>相机调整</button><button>组</button>
  <button class="hot"><span class="ic checked"><svg viewBox="0 0 16 16"><path d="M3 8l3 3 6-7" fill="none" stroke="#1c3c58" stroke-width="1.500"/></svg></span>绘图</button>
  <button>绘图次序</button><button>绘图次序, 注释前置</button><button>缩放</button><button>视口</button>
</div>

<svg class="marks" aria-hidden="true">
  <defs><marker id="head" viewBox="0 0 26 14" refX="24" refY="7" markerWidth="26" markerHeight="14" markerUnits="userSpaceOnUse" orient="auto"><path d="M26 7L0 0l4 7-4 7z" fill="#f00"/></marker></defs>
  <g stroke="#f00" stroke-width="3" stroke-linecap="round">
    <path d="M215 122L323 48" marker-end="url(#head)"/>
    <path d="M282 184L361 111" marker-end="url(#head)"/>
    <path d="M531 173L596 117" marker-end="url(#head)"/>
    <path d="M140 492L44 432" marker-end="url(#head)"/>
    <path d="M568 896L699 948" marker-end="url(#head)"/>
  </g>
  <use href="#cursor" x="848" y="960" width="13" height="21"/>
</svg>
</body>
</html>
```
FILE: styles.css
```css
* { box-sizing: border-box; }

body {
  margin: 0;
  height: 100vh;
  overflow: hidden;
  position: relative;
  background: #f4f6f8;
  color: #e6e8ea;
  font: 12px/16px "Open Sans", "Noto Sans CJK SC", sans-serif;
}

button, input, select {
  margin: 0;
  padding: 0;
  border: 0;
  background: none;
  color: inherit;
  font: inherit;
  outline: 0;
}
select { appearance: none; }
svg { display: block; flex: none; }
button svg { width: 16px; height: 16px; }

.defs { position: absolute; width: 0; height: 0; }
.s { fill: none; stroke: var(--ink, #dcdcdc); }
.w { stroke-width: 2; }
.f { fill: var(--ink, #dcdcdc); }
.b { fill: #76bfff; }
.sb { fill: none; stroke: var(--blue, #76bfff); }

.caret {
  flex: none;
  width: 6px;
  border: 3px solid transparent;
  border-top: 4px solid #d0d3d8;
  border-bottom: 0;
}
.caret.wide { width: 8px; border-width: 5px 4px 0; }
.caret-up { border: 4px solid transparent; border-bottom: 5px solid #555; border-top: 0; }
.caret-right { border: 4px solid transparent; border-left: 5px solid #ddd; border-right: 0; }

.window {
  display: flex;
  flex-direction: column;
  height: calc(100vh - 8px);
  margin: 0 2px;
  border: 1px solid #0696d7;
  background: #222933;
}

/* title bar */
.titlebar { display: flex; flex: none; height: 27px; margin-bottom: 2px; align-items: center; position: relative; }
.quick { display: flex; align-items: center; gap: 8px; padding-left: 8px; }
.quick button { display: flex; align-items: center; }
.quick .logo { gap: 5px; margin-right: 10px; }
.quick > .caret { margin: 0 -2px 0 -2px; }
.quick .dim { opacity: .35; margin-left: 1px; }
.quick .customize svg { width: 8px; height: 8px; }
.quick .customize { margin-left: 2px; }
.quick .share { gap: 4px; color: #8cceff; }
.titlebar h1 { position: absolute; left: 46%; margin: 0; font-size: 13px; font-weight: 400; }
.info { display: flex; align-items: center; margin-left: auto; gap: 5px; }
.info button { display: flex; align-items: center; gap: 4px; }
.search { width: 178px; height: 20px; padding: 0 4px; background: #464f60; font-style: italic; }
.search::placeholder { color: #b4b9c2; opacity: 1; }
.login-caret { margin: 0 4px 0 60px; }
.info .login { margin-left: 3px; }
.info .cart { margin-right: 3px; }
.vsep { width: 1px; height: 18px; margin: 0 4px; background: #5a616d; }
.info .help { display: block; width: 16px; height: 16px; border-radius: 8px; background: #dcdcdc; color: #222933; font-weight: 700; text-align: center; }
.winbtns, .docbtns { display: flex; }
.winbtns { gap: 13px; margin: 0 9px 0 68px; }
.winbtns svg, .docbtns svg { width: 12px; height: 12px; }

/* menu bar */
.menubar { display: flex; flex: none; height: 19px; padding-left: 6px; gap: 1px; border-bottom: 1px solid #3b4453; color: #b4b9c0; }
.menubar > button { padding: 0 12px; }
.menubar .open { background: #464f60; color: #e6e8ea; }
.docbtns { margin-left: auto; padding-right: 5px; gap: 5px; align-items: center; }

/* ribbon */
.ribbon-tabs { display: flex; flex: none; height: 24px; padding: 4px 0 0 7px; align-items: center; color: #b4b9c0; }
.ribbon-tabs button { padding: 0 10px; height: 20px; }
.ribbon-tabs .active { padding: 0 9px; background: #3b4453; color: #fff; }
.ribbon-tabs .express-tools { margin-left: 186px; }
.minimize { display: flex; width: 15px; height: 8px; margin: 0 4px 0 21px; background: #eee; align-items: center; justify-content: center; }
.minimize .caret-up { border-width: 0 3px 3px; }

.ribbon { display: flex; flex: none; height: 99px; margin: 0 4px; background: #3b4453; }
.panel { display: flex; flex: none; flex-direction: column; border-right: 1px solid #2a313c; }
.panel .body { display: flex; height: 79px; padding-left: 1px; }
.panel .title { display: flex; height: 20px; align-items: center; justify-content: center; gap: 6px; position: relative; }
.big { display: flex; flex: none; width: 40px; flex-direction: column; align-items: center; padding-top: 8px; line-height: 16px; }
.big svg { width: 32px; height: 32px; margin-bottom: 4px; }
.big .caret { margin-top: 3px; }
.col { display: flex; flex-direction: column; gap: 2px; padding-top: 6px; }
.col button { display: flex; height: 22px; padding: 0 4px; align-items: center; gap: 5px; white-space: nowrap; }
.draw { width: 211px; }
.draw .body { gap: 1px; }
.draw .tools { margin-left: 3px; }
.modify { width: 202px; }
.modify .body { padding-left: 3px; }
.modify .first { width: 59px; }
.annotate { width: 181px; }
.annotate .body { justify-content: flex-end; }
.annotate button { gap: 7px; }
.annotate .plain { padding-right: 17px; }
.layers { width: 247px; }
.layers .combo { width: 200px; }
.layers .layerset { width: 60px; height: 16px; }
.layers .col button { gap: 16px; padding: 10px 0 0 13px; }
.blocks { width: 139px; }
.blocks .big { width: 45px; }
.props { width: 244px; }
.icons3 { width: 20px; padding: 9px 2px 0; gap: 8px; }
.icons3 svg { width: 16px; height: 16px; }
.combos { width: 180px; }
.combo { display: flex; height: 22px; align-items: center; padding: 0 2px 0 3px; border: 1px solid #29303b; background: #4c586d; }
.combo select { flex: 1; min-width: 0; }
.combo .swatch { width: 16px; height: 16px; margin: 0 11px 0 9px; border: 1px solid #ccc; background: #fff; }
.combo .rule { width: 64px; height: 1px; margin-right: 3px; background: #f0f0f0; }
.panel .corner { position: absolute; right: 4px; width: 6px; height: 6px; }
.groups { width: 69px; }
.groups .on { border: 1px solid #76bfff; padding: 0 3px; }
.utils { width: 75px; }
.utils .body, .clip .body { padding-left: 4px; gap: 4px; }
.clip { width: 76px; border: 0; }

/* drawing tabs */
.doc-tabs { display: flex; flex: none; height: 26px; padding: 4px 0 0 22px; gap: 3px; }
.doc-tabs button { display: flex; align-items: center; text-align: left; }
.doc-tabs .start { width: 122px; padding-left: 13px; background: #313945; color: #b4b9c0; clip-path: polygon(8px 0, 114px 0, 122px 100%, 0 100%); }
.doc-tabs .current { width: 130px; justify-content: space-between; padding: 0 19px 0 11px; background: #3b4453; color: #fff; font-weight: 700; clip-path: polygon(5px 0, 120px 0, 130px 100%, 0 100%); }
.doc-tabs .x { color: #aaa; font-weight: 400; }
.doc-tabs .add { width: 20px; height: 14px; margin-top: 5px; justify-content: center; border-radius: 3px; background: #2f3742; }
.add svg { width: 8px; height: 8px; }

/* workspace */
.workspace { display: flex; flex: 1; min-height: 0; margin: 0 3px; border-top: 4px solid #3b4453; }
.dock { flex: none; width: 29px; background: #3b4453; }
.toolbar { display: flex; flex-direction: column; width: 25px; margin-left: 1px; border: 1px solid #29303a; border-top: 0; }
.toolbar button { height: 22px; padding-left: 2px; }
.toolbar .mtext { color: #dcdcdc; font-size: 18px; font-weight: 600; padding: 0 2px; }
.grip { width: 14px; height: 3px; margin: 3px 0; background: repeating-linear-gradient(90deg, #c0c4ca 0 1px, transparent 1px 2px); border-top: 0; }
.canvas { flex: 1; position: relative; background: #212830; overflow: hidden; }
.viewport-label { padding: 5px 3px; color: #07090b; font-size: 13px; }
.drawing { position: absolute; inset: 0; width: 100%; height: 100%; }
.ucs { position: absolute; left: 16px; bottom: 12px; width: 76px; height: 76px; overflow: visible; }
.ucs text { fill: #fff; font: 300 18px "Open Sans", sans-serif; }
.viewcube {
  position: absolute; right: 16px; top: 16px; width: 134px; height: 134px;
  display: grid; grid-template: 22px 1fr 22px / 22px 1fr 22px; place-items: center;
  color: #a9abad; font-size: 19px; line-height: 22px;
}
.viewcube::before { content: ""; position: absolute; inset: 7px; border: 13px solid #41474f; border-radius: 50%; }
.viewcube span { position: relative; }
.viewcube span:nth-child(1) { grid-area: 1 / 2; }
.viewcube span:nth-child(2) { grid-area: 2 / 1; }
.viewcube b { grid-area: 2 / 2; width: 52px; height: 52px; border: 10px solid #afb0b2; outline: 1px solid #74787c; background: #9da4a9; color: #565b62; font: 300 30px/28px "Noto Sans CJK SC", sans-serif; text-align: center; }
.viewcube span:nth-child(4) { grid-area: 2 / 3; }
.viewcube span:nth-child(5) { grid-area: 3 / 2; }
.wcs { position: absolute; right: 59px; top: 169px; display: flex; width: 48px; height: 18px; align-items: center; justify-content: space-evenly; border: 1px solid #777b88; border-radius: 4px; background: #9295a2; color: #454954; font-size: 11px; }
.wcs svg { width: 10px; height: 6px; }
.navbar { position: absolute; right: 4px; top: 212px; width: 32px; border-radius: 4px; background: #5c6164; box-shadow: 0 0 2px 1px #14181d; }
.cmdline { position: absolute; left: 20%; right: 20%; bottom: 1px; display: flex; height: 26px; align-items: center; background: #262d38; }
.cmdline button { display: flex; width: 26px; justify-content: center; color: #ccc; }
.cmdline .close { width: 20px; }
.cmdgrip { width: 6px; height: 18px; margin-left: 4px; background: radial-gradient(#aaa 1px, transparent 1px) 0 0 / 3px 3px; }
.cmdline button svg { width: 14px; height: 14px; }
.cmdbox { display: flex; flex: 1; height: 25px; align-items: center; padding: 0 4px; background: #bdbebf; border-radius: 2px; }
.cmdbox svg { width: 16px; height: 16px; }
.cmdbox .caret { margin: 0 7px 0 2px; border-top-color: #444; }
.cmdbox input { flex: 1; color: #444; font-style: italic; font-size: 13px; }
.cmdbox input::placeholder { color: #666; opacity: 1; }
.ime { position: absolute; left: 61%; bottom: 12px; display: flex; gap: 3px; height: 25px; padding: 0 5px; margin-left: 2px; align-items: center; border-radius: 5px; background: #fff; color: #222; font-size: 13px; box-shadow: 0 1px 4px #000; }
.ime svg { width: 12px; height: 14px; }

/* status bar */
.status { display: flex; flex: none; height: 32px; margin: 0 3px; border-top: 1px solid #3b4453; justify-content: space-between; }
.layouts { display: flex; height: 18px; padding-left: 14px; gap: 5px; color: #b4b9c0; }
.layouts button { padding: 0 9px; background: #2c343f; clip-path: polygon(0 0, 100% 0, calc(100% - 4px) 100%, 4px 100%); }
.layouts .active { background: #3b4453; color: #fff; font-weight: 700; }
.tray { display: flex; gap: 2px; padding: 1px 1px 0 0; }
.set, .model { display: flex; height: 24px; align-items: center; background: #3b4453; }
.model { padding: 0 3px; }
.set button { display: flex; min-width: 24px; height: 24px; justify-content: center; align-items: center; }
.set .hl { background: #5f8dbf; --ink: #fff; }
.set > .caret { margin: 0 4px; }
.last button { min-width: 25px; }
.units { width: 97px; padding-left: 8px; }
.units svg { width: 8px; height: 16px; }
.units select { flex: 1; min-width: 0; margin-left: 14px; }

.taskbar { height: 8px; overflow: hidden; background: linear-gradient(90deg, #2b2722 0, #161719 32%, #4d4d4d 33%, #555 46%, #1b1b1c 47%, #2a231b 66%, #1b1b1c 72%, #2b2a29 100%); color: #eee; text-align: right; }
.taskbar time { display: block; padding: 3px 74px 0 0; }

.watermark { position: absolute; right: 10px; bottom: 8px; display: flex; opacity: .75; }
.watermark svg { width: 40px; height: 40px; }
.watermark p { margin: 0; color: #1767ae; font: 700 21px/22px "Noto Sans CJK SC", sans-serif; }
.watermark small { display: block; color: #3a9a3d; font: 700 17px/18px "Liberation Sans", sans-serif; }

/* pull-down menus */
.menu { position: absolute; padding: 2px; border: 1px solid #ccc; background: linear-gradient(90deg, #f0f0f0 28px, #f2f2f2 28px); color: #000; box-shadow: 3px 3px 4px rgba(0, 0, 0, .6); --ink: #666; --blue: #1787e0; }
.menu button { display: flex; width: 100%; height: 22px; align-items: center; padding: 0 8px 0 32px; position: relative; white-space: nowrap; }
.menu .hot { background: #91c9f7; }
.menu .more { width: 8px; height: 8px; margin-left: auto; }
.menu kbd { margin: 0 11px 0 auto; font: inherit; }
.menu hr { height: 1px; margin: 3px 0 3px 28px; border: 0; background: #d7d7d7; }
.menu .ic { width: 22px; height: 22px; margin-left: -32px; margin-right: 10px; padding: 3px; }
.menu .ic.on { background: #91c9f7; }
.menu .ic.checked { background: #56b0fa; }
.menu .ic.blue { color: #1787e0; }
.menu .spell { padding: 1px 2px 0; color: #666; font: 700 8px/10px "Liberation Sans", sans-serif; }
.menu .spell svg { width: 16px; height: 9px; }
.tools-menu { left: 323px; top: 49px; width: 246px; }
.toolbars-menu { left: 563px; top: 93px; width: 142px; }
.list-menu { left: 699px; top: 2px; width: 193px; }
.scroll { display: flex; height: 19px; padding-left: 20px; align-items: center; }
.scroll .caret-up { border-width: 0 6px 5px; border-bottom-color: #999; }

.marks { position: absolute; inset: 0; width: 100%; height: 100%; pointer-events: none; }
.marks g { filter: drop-shadow(2px 2px 1px rgba(0, 0, 0, .5)); }
```
